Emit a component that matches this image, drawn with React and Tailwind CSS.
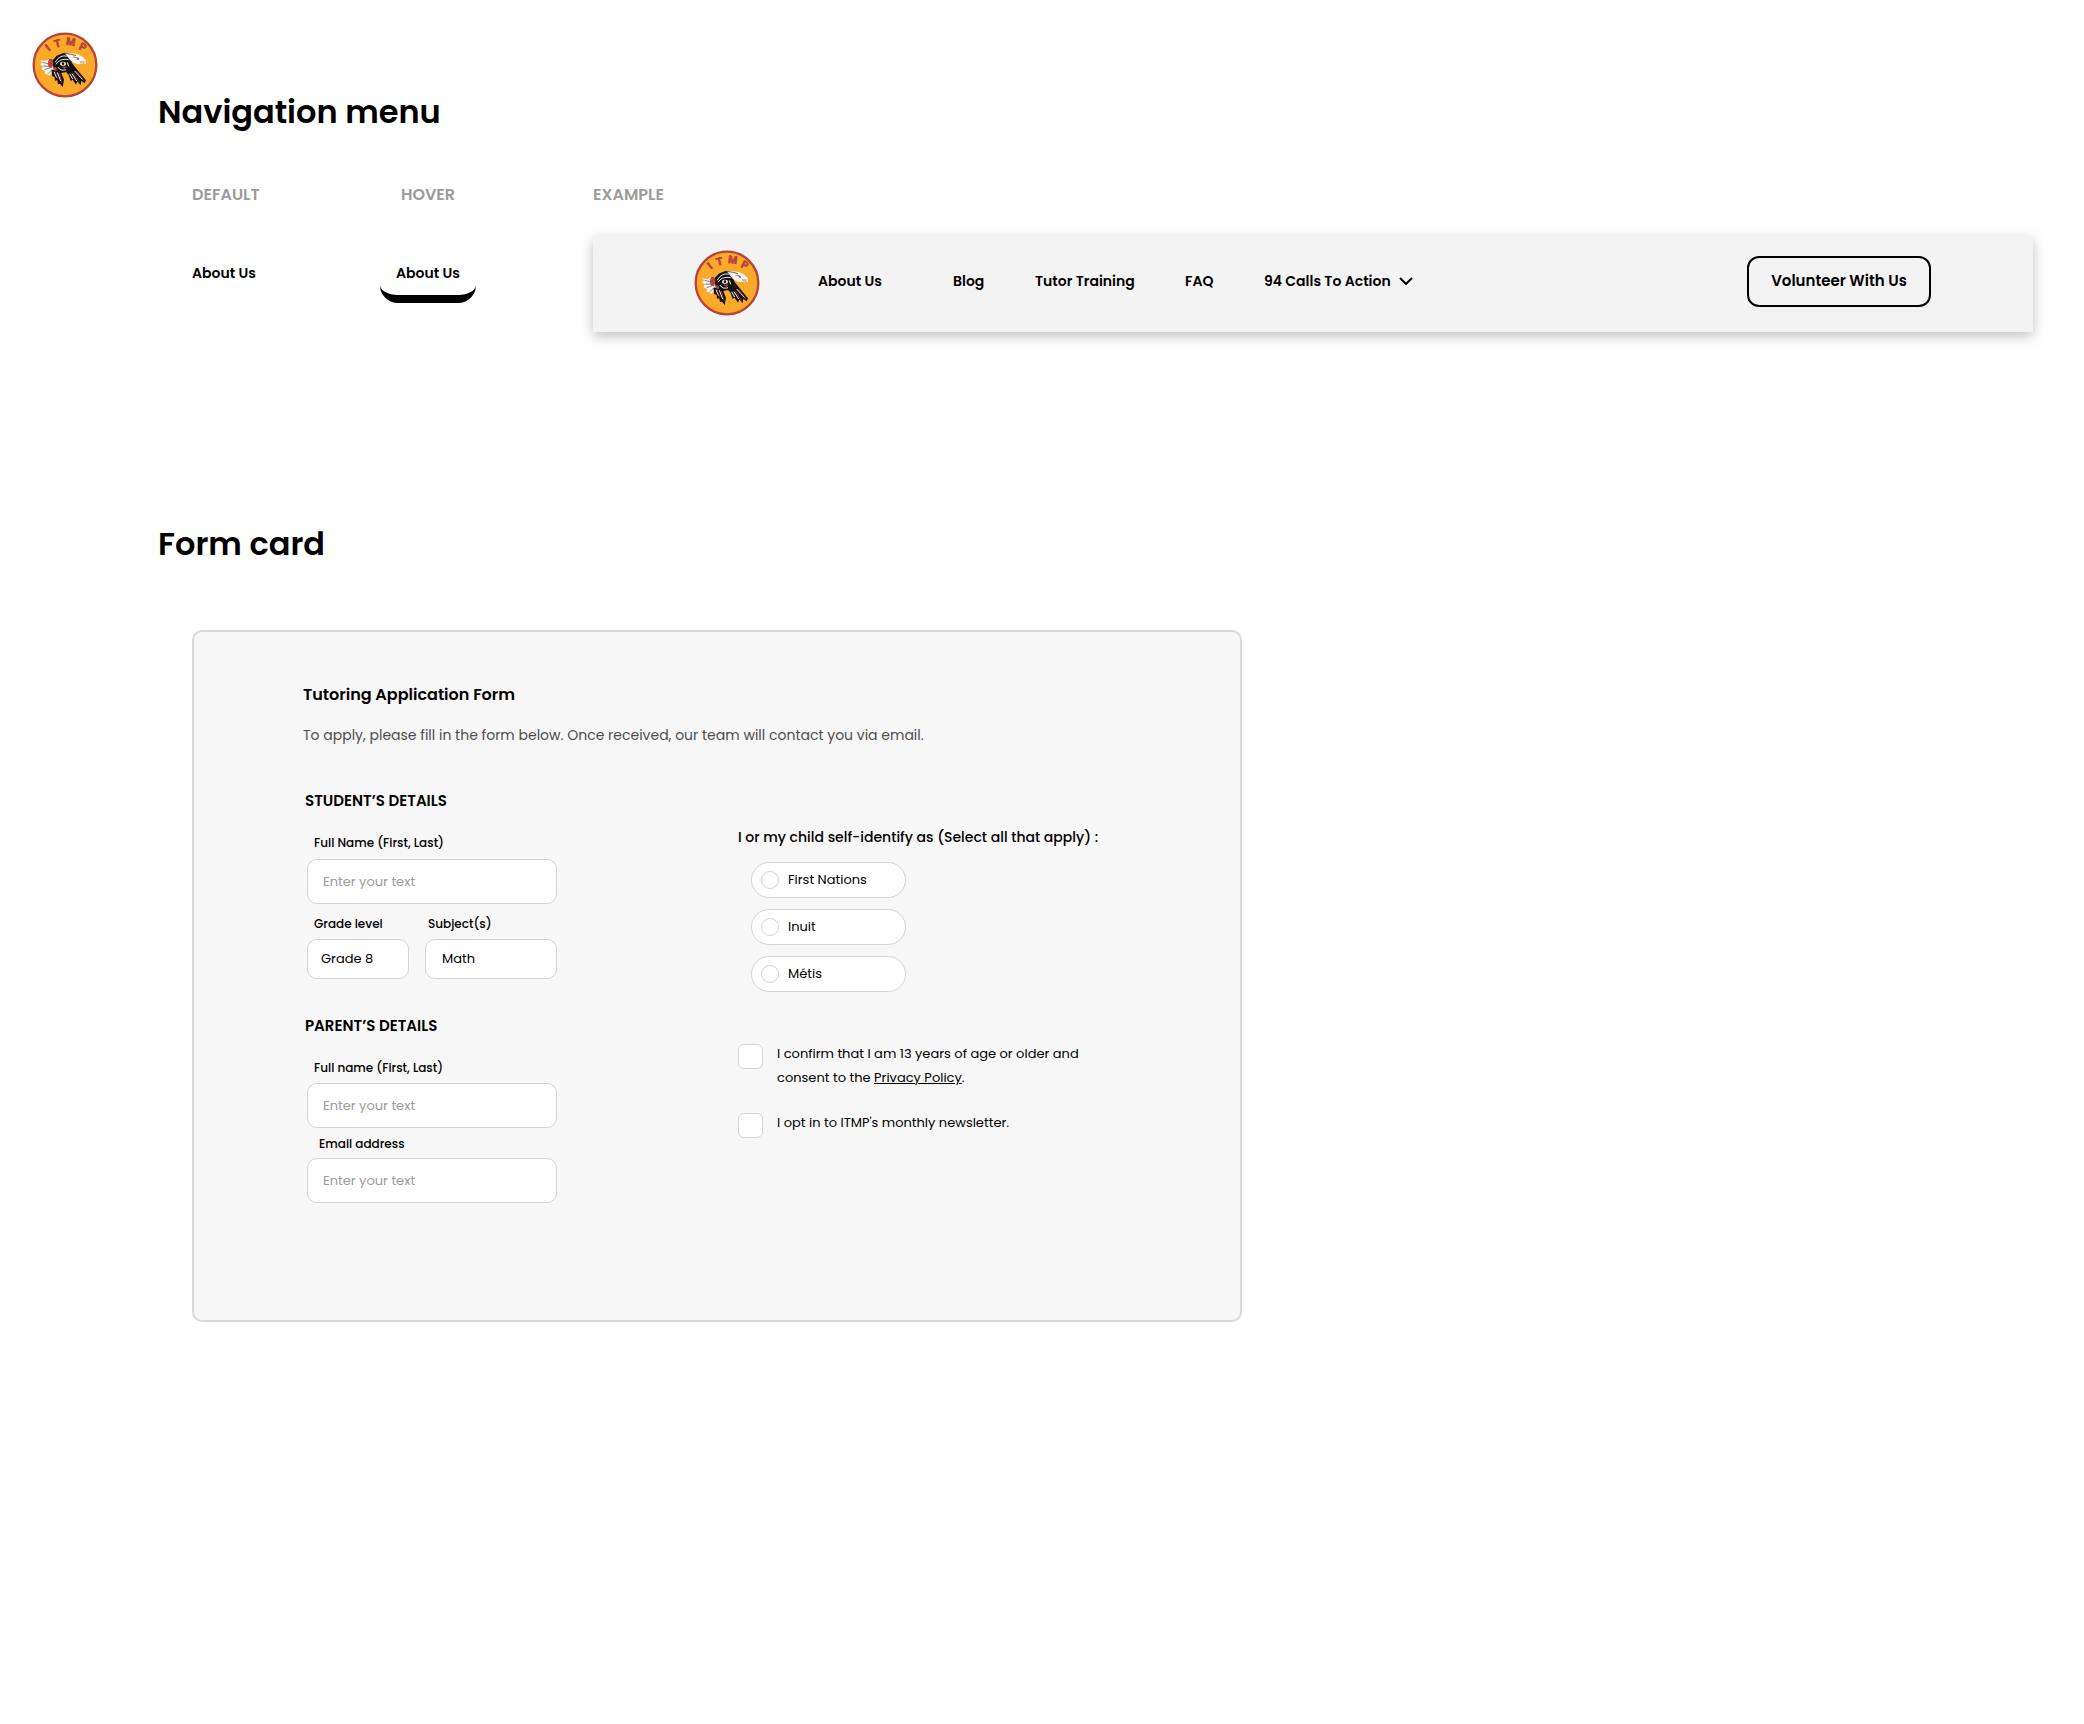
import { useState } from 'react'

const identities = ['First Nations', 'Inuit', 'Métis']

const inputClass =
  'h-[45px] w-full rounded-[10px] border border-[#d4d4d4] bg-white px-[15px] text-[13px] text-black placeholder:text-[#9b9b9b] outline-none focus:border-black'
const selectClass =
  'h-10 w-full appearance-none rounded-[10px] border border-[#d4d4d4] bg-white text-[13px] text-black outline-none focus:border-black'

function Logo() {
  return (
    <svg viewBox="6 7 198 198" className="size-[66px] shrink-0" role="img" aria-label="ITMP">
      <circle cx="105" cy="106" r="94" fill="#fba92a" stroke="#b7433a" strokeWidth="7" />
      <g
        fill="#b7433a"
        stroke="#b7433a"
        strokeWidth="2"
        fontSize="31"
        fontWeight="700"
        textAnchor="middle"
        className="font-['Liberation_Sans_Narrow','Roboto',sans-serif]"
      >
        <text transform="translate(60 63) rotate(-38)">I</text>
        <text transform="translate(85 52) rotate(-14)">T</text>
        <text transform="translate(121 47) rotate(8)">M</text>
        <text transform="translate(154 62) rotate(26)">P</text>
      </g>
      {/* tail */}
      <path d="M30 92 46 94 56 89 66 96 70 116 80 122 74 134 64 130 58 140 52 134 44 132 45 124 34 119 39 110 30 104 37 98Z" fill="#f6f3f0" />
      <path d="M38 98 56 103M40 109 58 110M44 120 62 114M54 132 66 120" stroke="#4a4240" strokeWidth="2" fill="none" />
      {/* feathers */}
      <path d="M64 120 90 120 102 150 98 172 90 162 84 164 82 152 75 153 74 142 67 140Z" fill="#141112" />
      <path d="M104 122 124 98 138 116 168 152 164 161 154 153 152 167 142 155 138 165 128 150 122 154 116 136Z" fill="#141112" />
      <path d="M72 126 80 144M82 128 92 154M126 132 140 154M134 124 158 150M119 132 128 148" stroke="#f6f3f0" strokeWidth="3" fill="none" />
      <path d="M76 128 84 150M88 130 96 160M130 130 148 158M140 125 162 154" stroke="#b7433a" strokeWidth="2" fill="none" />
      {/* body */}
      <path d="M66 94 80 78 100 70 114 74 124 90 128 108 116 126 92 130 72 120Z" fill="#141112" />
      <path d="M76 98C84 82 98 76 110 80M78 104C84 94 96 86 116 90M84 112C88 120 96 124 108 120M112 98 116 110" stroke="#f6f3f0" strokeWidth="3" fill="none" />
      <ellipse cx="99" cy="102" rx="9" ry="6" fill="#f6f3f0" />
      <circle cx="99" cy="102" r="4" fill="#141112" />
      <path d="M94 112 110 110 104 118Z" fill="#b7433a" />
      <ellipse cx="62" cy="101" rx="8" ry="14" fill="#b7433a" />
      <path d="M70 114 78 112 82 122 74 124Z" fill="#b7433a" />
      {/* head */}
      <path d="M104 71 122 70 142 74 156 80 167 91 168 104 160 100 146 104 134 101 122 93Z" fill="#f8f6f4" />
      <path d="M103 71 124 74 138 78" stroke="#141112" strokeWidth="2" fill="none" />
      <path d="M130 82 142 84 146 91M150 97 164 97" stroke="#6b4a42" strokeWidth="2" fill="none" />
      <circle cx="143" cy="87" r="3" fill="#b7433a" />
    </svg>
  )
}

function Field({ id, label, labelClass, children }) {
  return (
    <div className="flex flex-col">
      <label htmlFor={id} className={`text-[12px] leading-5 font-medium ${labelClass}`}>
        {label}
      </label>
      {children}
    </div>
  )
}

function Consent({ id, children }) {
  return (
    <div className="flex items-start gap-3.5">
      <input
        id={id}
        type="checkbox"
        className="mt-0.5 size-[25px] shrink-0 appearance-none rounded-md border border-[#d4d4d4] bg-white checked:bg-black"
      />
      <label htmlFor={id} className="max-w-[320px] text-[13px] leading-6">
        {children}
      </label>
    </div>
  )
}

function NavBar() {
  return (
    <nav className="flex items-center bg-[#f3f3f3] pt-3.5 pr-[102px] pb-4 pl-[101px] shadow-[0_4px_12px_rgba(0,0,0,0.25)]">
      <Logo />
      <div className="ml-[58px] grid grid-cols-[135px_82px_150px_79px_auto] pb-1 text-[14px] leading-6 font-semibold whitespace-nowrap">
        <a href="#about">About Us</a>
        <a href="#blog">Blog</a>
        <a href="#training">Tutor Training</a>
        <a href="#faq">FAQ</a>
        <button type="button" className="flex items-center gap-2 font-semibold">
          94 Calls To Action
          <svg viewBox="0 0 14 8" className="h-2 w-3.5" fill="none" stroke="currentColor" strokeWidth="2">
            <path d="M1 1 7 7 13 1" />
          </svg>
        </button>
      </div>
      <div className="ml-auto pb-1">
        <button type="button" className="h-[51px] w-[184px] rounded-xl border-2 border-black text-[15px] font-semibold">
          Volunteer With Us
        </button>
      </div>
    </nav>
  )
}

function ApplicationForm() {
  const [identity, setIdentity] = useState('')

  return (
    <form className="mt-[62px] ml-[34px] max-w-[1050px] rounded-[10px] border-2 border-[#d9d9d9] bg-[#f7f7f7] pt-[51px] pr-10 pb-[117px] pl-[109px]">
      <h3 className="text-[16px] leading-6 font-semibold">Tutoring Application Form</h3>
      <p className="mt-4 text-[14px] leading-6 text-[#4d4d4d]">
        To apply, please fill in the form below. Once received, our team will contact you via email.
      </p>

      <div className="mt-[42px] ml-0.5 grid grid-cols-[252px_1fr] gap-[181px]">
        <div>
          <h4 className="text-[15px] leading-6 font-semibold">STUDENT’S DETAILS</h4>
          <div className="mt-5 ml-0.5">
            <Field id="student-name" label="Full Name (First, Last)" labelClass="mb-1.5 ml-[7px]">
              <input id="student-name" type="text" placeholder="Enter your text" className={inputClass} />
            </Field>
            <div className="mt-2.5 grid grid-cols-[102px_132px] gap-4">
              <Field id="grade" label="Grade level" labelClass="mb-[5px] ml-[7px]">
                <select id="grade" className={`${selectClass} px-[13px]`}>
                  <option>Grade 8</option>
                </select>
              </Field>
              <Field id="subject" label="Subject(s)" labelClass="mb-[5px] ml-[3px]">
                <select id="subject" className={`${selectClass} px-4`}>
                  <option>Math</option>
                </select>
              </Field>
            </div>
          </div>

          <h4 className="mt-[35px] text-[15px] leading-6 font-semibold">PARENT’S DETAILS</h4>
          <div className="mt-5 ml-0.5">
            <Field id="parent-name" label="Full name (First, Last)" labelClass="mb-[5px] ml-[7px]">
              <input id="parent-name" type="text" placeholder="Enter your text" className={inputClass} />
            </Field>
            <div className="mt-1.5">
              <Field id="email" label="Email address" labelClass="mb-1 ml-3">
                <input id="email" type="email" placeholder="Enter your text" className={inputClass} />
              </Field>
            </div>
          </div>
        </div>

        <div className="pt-9">
          <fieldset>
            <legend className="text-[14px] leading-6 font-medium">
              I or my child self-identify as (Select all that apply) :
            </legend>
            <div className="mt-[13px] ml-[13px] flex flex-col gap-[11px]">
              {identities.map((name) => (
                <label
                  key={name}
                  className="flex h-9 w-[155px] items-center gap-[9px] rounded-full border border-[#d4d4d4] bg-white pl-[9px] text-[13px]"
                >
                  <input
                    type="radio"
                    name="identity"
                    checked={identity === name}
                    onChange={() => setIdentity(name)}
                    className="size-[18px] appearance-none rounded-full border border-[#d4d4d4] bg-white checked:bg-black"
                  />
                  {name}
                </label>
              ))}
            </div>
          </fieldset>

          <div className="mt-[50px] flex flex-col gap-[21px]">
            <Consent id="age">
              I confirm that I am 13 years of age or older and consent to the{' '}
              <a href="#privacy" className="underline">Privacy Policy</a>.
            </Consent>
            <Consent id="newsletter">I opt in to ITMP's monthly newsletter.</Consent>
          </div>
        </div>
      </div>
    </form>
  )
}

export default function App() {
  return (
    <div className="flex min-h-screen gap-[60px] bg-white py-8 pr-[51px] pl-8 font-['Poppins','Inter',sans-serif] text-black">
      <Logo />
      <main className="min-w-0 flex-1 pt-14">
        <h2 className="text-[32px] leading-[48px] font-semibold">Navigation menu</h2>
        <div className="mt-[47px] ml-[34px] grid grid-cols-[188px_213px_1fr]">
          <div className="flex flex-col items-start">
            <span className="text-[16px] leading-6 font-semibold text-[#9b9b9b]">DEFAULT</span>
            <a href="#about" className="mt-[54px] text-[14px] leading-6 font-semibold">About Us</a>
          </div>
          <div className="flex w-24 flex-col items-center">
            <span className="text-[16px] leading-6 font-semibold text-[#9b9b9b]">HOVER</span>
            <a
              href="#about"
              className="mt-[54px] w-full rounded-b-[18px] border-b-8 border-black pb-2.5 text-center text-[14px] leading-6 font-semibold"
            >
              About Us
            </a>
          </div>
          <div className="flex flex-col">
            <span className="mb-[29px] text-[16px] leading-6 font-semibold text-[#9b9b9b]">EXAMPLE</span>
            <NavBar />
          </div>
        </div>

        <h2 className="mt-[188px] text-[32px] leading-[48px] font-semibold">Form card</h2>
        <ApplicationForm />
      </main>
    </div>
  )
}
